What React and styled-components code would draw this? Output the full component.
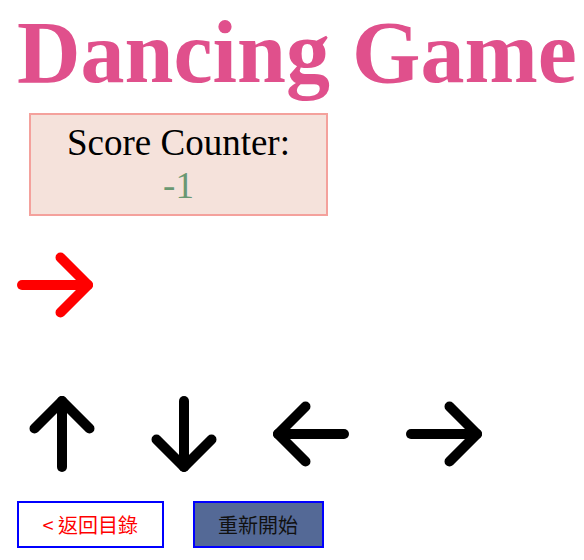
import React from "react";
import styled, { createGlobalStyle } from "styled-components";

const Global = createGlobalStyle`
  html, body { margin: 0; padding: 0; background: #ffffff; }
  body { font-family: "Liberation Serif", "Times New Roman", serif; }
`;

const Page = styled.div`
  display: flex;
  flex-direction: column;
  align-items: flex-start;
  padding: 6px 0 0 17px;
`;

const Title = styled.h1`
  margin: 4px 0 0 0;
  font-family: "Liberation Serif", "Times New Roman", serif;
  font-weight: 700;
  font-size: 88px;
  line-height: 86px;
  color: #e0508c;
  white-space: nowrap;
`;

const ScoreBox = styled.div`
  box-sizing: border-box;
  width: 299px;
  margin: 17px 0 0 12px;
  padding: 6px 0 7px;
  background: #f5e2db;
  border: 2px solid #f4a19c;
  text-align: center;
  font-family: "Liberation Serif", "Times New Roman", serif;
  font-size: 37px;
  line-height: 43px;
`;

const ScoreLabel = styled.div`
  color: #000000;
`;

const ScoreValue = styled.div`
  color: #6a9872;
`;

const ArrowSvg = styled.svg`
  display: block;
  flex: none;
  margin-left: ${(p) => p.$ml || 0}px;
`;

const Target = styled.div`
  margin: 29px 0 0 -2px;
`;

const ArrowRow = styled.div`
  display: flex;
  align-items: center;
  margin-top: 69px;
`;

const ButtonRow = styled.div`
  display: flex;
  gap: 29px;
  margin-top: 27px;
`;

const Button = styled.button`
  box-sizing: border-box;
  height: 47px;
  padding: 0 23.5px;
  border: 2px solid #0000ff;
  background: ${(p) => (p.$primary ? "#546996" : "#ffffff")};
  color: ${(p) => (p.$primary ? "#111111" : "#ff0000")};
  font-family: "Noto Sans CJK TC", "Noto Sans", sans-serif;
  font-size: 20px;
  font-weight: 400;
  line-height: 1;
  cursor: pointer;
  white-space: nowrap;
`;

const ROTATION = { right: 0, down: 90, left: 180, up: 270 };

// A thick stroked arrow, drawn pointing right and turned to face `dir`.
function Arrow({ dir = "right", color = "#000000", ml }) {
  return (
    <ArrowSvg width="80" height="80" viewBox="0 0 80 80" $ml={ml}>
      <g
        transform={`rotate(${ROTATION[dir]} 40 40)`}
        fill="none"
        stroke={color}
        strokeWidth="10"
        strokeLinecap="round"
        strokeLinejoin="round"
      >
        <path d="M7 40H73" />
        <path d="M45.5 12.5L73 40L45.5 67.5" />
      </g>
    </ArrowSvg>
  );
}

export default function App() {
  return (
    <>
      <Global />
      <Page>
        <Title>Dancing Game</Title>
        <ScoreBox>
          <ScoreLabel>Score Counter:</ScoreLabel>
          <ScoreValue>-1</ScoreValue>
        </ScoreBox>
        <Target>
          <Arrow dir="right" color="#ff0000" />
        </Target>
        <ArrowRow>
          <Arrow dir="up" ml={5} />
          <Arrow dir="down" ml={42} />
          <Arrow dir="left" ml={47} />
          <Arrow dir="right" ml={53} />
        </ArrowRow>
        <ButtonRow>
          <Button>&lt; 返回目錄</Button>
          <Button $primary>重新開始</Button>
        </ButtonRow>
      </Page>
    </>
  );
}
